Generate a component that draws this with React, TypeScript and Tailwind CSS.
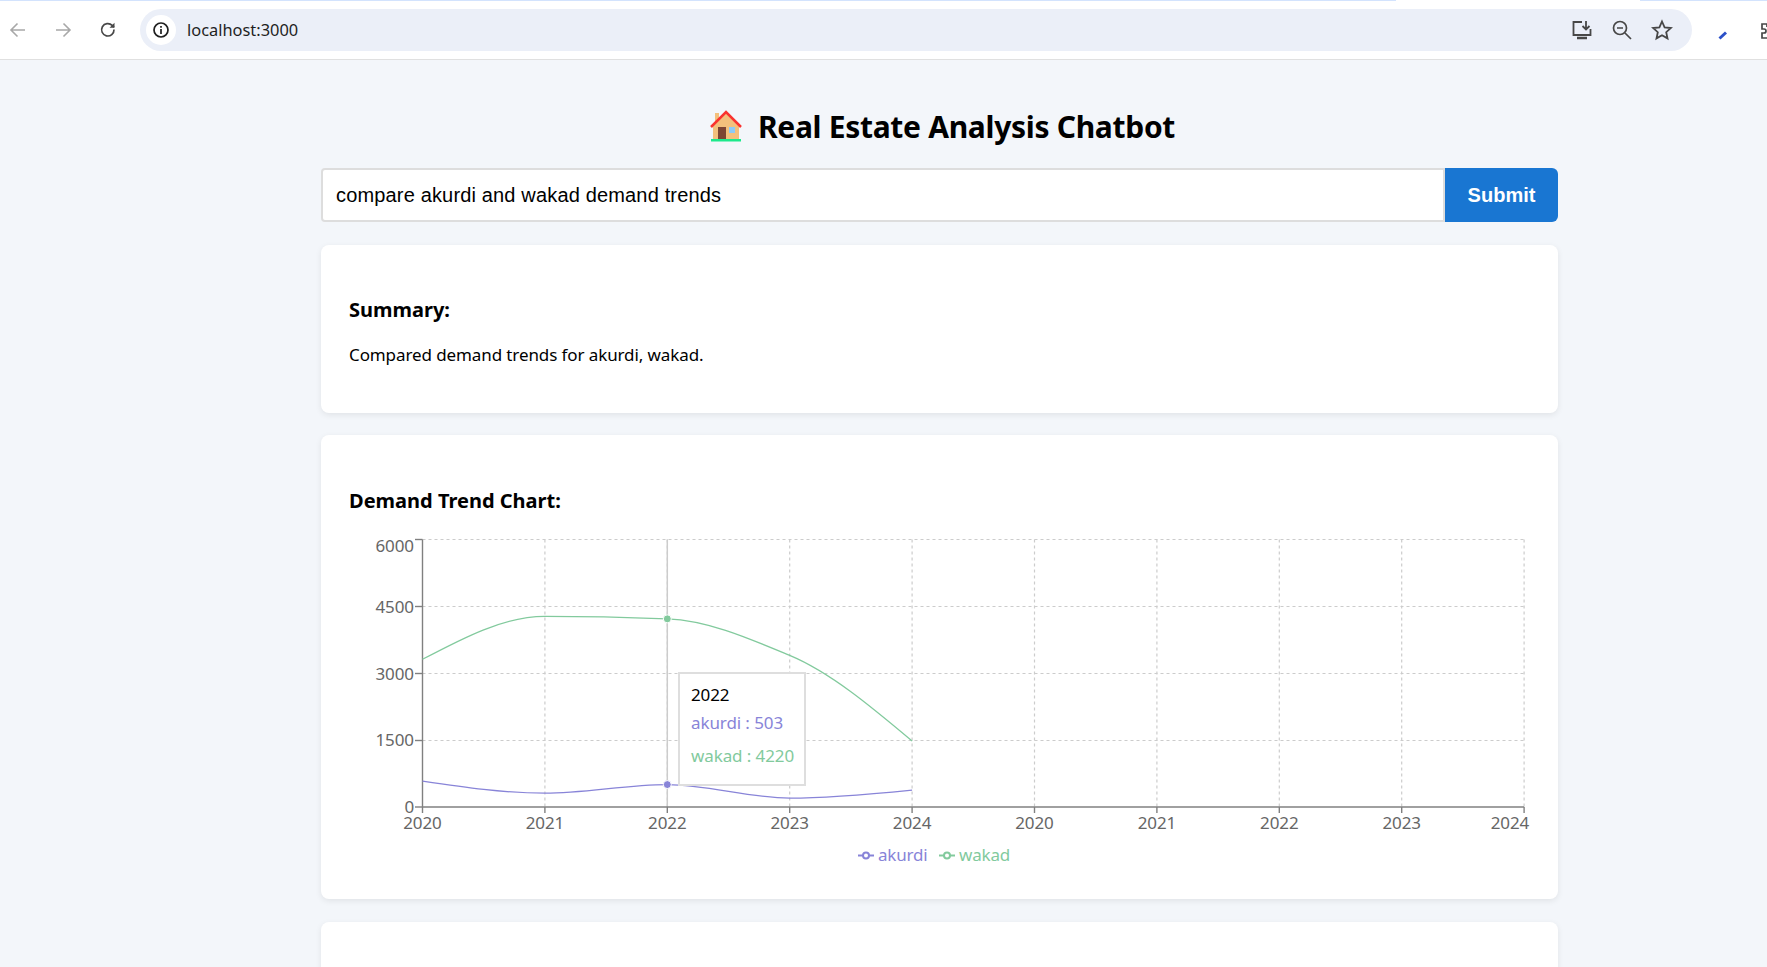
import React from 'react';

const bodyFont = "font-['Noto_Sans',sans-serif]";

const years = [2020, 2021, 2022, 2023, 2024];
const akurdi = [582, 310, 503, 200, 380];
const wakad = [3313, 4276, 4220, 3400, 1480];

const LEFT = 422.5;
const STEP = 122.4;
const RIGHT = LEFT + 9 * STEP;
const BOTTOM = 807;
const TOP = 539.5;
const xAt = (i: number) => LEFT + i * STEP;
const yAt = (v: number) => BOTTOM - (v / 6000) * (BOTTOM - TOP);

// same curve as recharts' "monotone" line
function monotonePath(values: number[]) {
  const pts = values.map((v, i) => [xAt(i), yAt(v)]);
  const n = pts.length;
  const slopes: number[] = [];
  for (let i = 0; i < n - 1; i++) {
    slopes.push((pts[i + 1][1] - pts[i][1]) / (pts[i + 1][0] - pts[i][0]));
  }
  const t: number[] = [];
  for (let i = 1; i < n - 1; i++) {
    const a = slopes[i - 1];
    const b = slopes[i];
    t[i] = a * b <= 0 ? 0 : (2 * a * b) / (a + b);
  }
  t[0] = (3 * slopes[0] - t[1]) / 2;
  t[n - 1] = (3 * slopes[n - 2] - t[n - 2]) / 2;
  let d = `M${pts[0][0]},${pts[0][1]}`;
  for (let i = 0; i < n - 1; i++) {
    const h = (pts[i + 1][0] - pts[i][0]) / 3;
    d += `C${pts[i][0] + h},${pts[i][1] + h * t[i]} ${pts[i + 1][0] - h},${pts[i + 1][1] - h * t[i + 1]} ${pts[i + 1][0]},${pts[i + 1][1]}`;
  }
  return d;
}

const BrowserBar: React.FC = () => (
  <div className="h-[60px] bg-white border-b border-[#e0e0e0] relative flex items-center shrink-0">
    <div className="absolute top-0 left-0 w-[1396px] h-px bg-[#d3e3fd]" />
    <div className="absolute top-0 left-[1640px] w-[127px] h-px bg-[#d3e3fd]" />
    <svg className="ml-[8px]" width="20" height="20" viewBox="0 0 20 20" fill="none" stroke="#a8a8a8" strokeWidth="1.6">
      <path d="M17 10H3.5M9.5 3.5L3 10l6.5 6.5" />
    </svg>
    <svg className="ml-[25px]" width="20" height="20" viewBox="0 0 20 20" fill="none" stroke="#a8a8a8" strokeWidth="1.6">
      <path d="M3 10h13.5M10.5 3.5L17 10l-6.500 6.500" />
    </svg>
    <svg className="ml-[25px]" width="20" height="20" viewBox="0 0 20 20" fill="none" stroke="#474747" strokeWidth="1.7">
      <path d="M16 9.500a6.200 6.200 0 1 1-1.800-4.100L16 7.200" />
      <path d="M16.500 2.800v5h-5" fill="#474747" stroke="none" />
    </svg>
    <div className="ml-[22px] w-[1552px] h-[42px] rounded-full bg-[#ebeff8] flex items-center pl-[6px] relative">
      <div className="w-[30px] h-[30px] rounded-full bg-white flex items-center justify-center">
        <svg width="18" height="18" viewBox="0 0 18 18" fill="none" stroke="#1f1f1f" strokeWidth="1.700">
          <circle cx="9" cy="9" r="7" />
          <path d="M9 8v5M9 5v1.800" />
        </svg>
      </div>
      <span className="ml-[11px] pt-[1px] text-[16.400px] leading-none text-[#1f1f1f] font-['Noto_Sans',sans-serif]">localhost:3000</span>
      <svg className="absolute left-[1431px] top-[10px]" width="22" height="22" viewBox="0 0 22 22" fill="none" stroke="#474747" strokeWidth="1.800">
        <path d="M11 3H2.500v13h17v-6" />
        <path d="M6 19h10" strokeWidth="2.500" />
        <path d="M15 2v8M11.500 7l3.500 3.500L18.500 7" />
      </svg>
      <svg className="absolute left-[1471px] top-[10px]" width="22" height="22" viewBox="0 0 22 22" fill="none" stroke="#474747" strokeWidth="1.700">
        <circle cx="9" cy="9" r="6.500" />
        <path d="M6 9h6M14 14l6 6" />
      </svg>
      <svg className="absolute left-[1511px] top-[10px]" width="22" height="22" viewBox="0 0 22 22" fill="none" stroke="#474747" strokeWidth="1.800">
        <path d="M11 2.500l2.600 5.800 6.300.700-4.700 4.200 1.300 6.200L11 16.300l-5.500 3.100 1.300-6.200L2.100 9l6.300-.700z" />
      </svg>
    </div>
    <svg className="absolute left-[1716px] top-[27px]" width="14" height="14" viewBox="0 0 14 14" fill="none">
      <path d="M3.500 11.500L10 5.500" stroke="#2b50c8" strokeWidth="3" />
    </svg>
    <svg className="absolute left-[1760px] top-[21px]" width="20" height="20" viewBox="0 0 20 20" fill="none" stroke="#474747" strokeWidth="1.700">
      <path d="M2 3h5v3a2 2 0 0 1 4 0V3h5v5h-3a2 2 0 0 0 0 4h3v5H2v-5h2a2 2 0 0 0 0-4H2z" />
    </svg>
  </div>
);

const HouseIcon: React.FC = () => (
  <svg width="34" height="34" viewBox="0 0 34 34">
    <rect x="6" y="4" width="4" height="10" fill="#f3c07c" />
    <path d="M4 16L17 4l13 12v14H4z" fill="#f3c07c" />
    <path d="M2 18L17 3l15 15" fill="none" stroke="#f9332f" strokeWidth="2.500" />
    <rect x="9" y="18" width="8" height="12" fill="#7d4533" />
    <rect x="20" y="18" width="6" height="6" fill="#8ccaf7" />
    <rect x="2" y="30" width="30" height="2.500" fill="#1de98b" />
  </svg>
);

const DemandChart: React.FC = () => {
  const hLines = [539.5, 606.5, 673.5, 740.5];
  const vLines = Array.from({ length: 9 }, (_, i) => xAt(i + 1));
  const xLabels = [...years, ...years];
  const yLabels: [string, number][] = [['6000', 546], ['4500', 607], ['3000', 674], ['1500', 740], ['0', 807]];

  return (
    <div className="relative h-[358px]">
      <svg width="1237" height="358" viewBox="321 513 1237 358" className="block" style={{ fontFamily: "'Noto Sans', sans-serif" }}>
        <g stroke="#ccc" strokeDasharray="3 3" strokeWidth="1.2" fill="none">
          {hLines.map(y => <line key={y} x1={LEFT} x2={RIGHT} y1={y} y2={y} />)}
          {vLines.map(x => <line key={x} x1={x} x2={x} y1={TOP} y2={BOTTOM} />)}
        </g>
        <line x1={xAt(2)} x2={xAt(2)} y1={TOP} y2={BOTTOM} stroke="#ccc" strokeWidth="1.5" />
        <g stroke="#808080" strokeWidth="1.400">
          <line x1={LEFT} x2={LEFT} y1={TOP} y2={BOTTOM} />
          <line x1={LEFT} x2={RIGHT} y1={BOTTOM} y2={BOTTOM} />
          {[539.5, 606.5, 673.5, 740.5, 807].map(y => <line key={y} x1={415} x2={LEFT} y1={y} y2={y} />)}
          {Array.from({ length: 10 }, (_, i) => <line key={i} x1={xAt(i)} x2={xAt(i)} y1={BOTTOM} y2={813} />)}
        </g>
        <g fill="#666" fontSize="17" letterSpacing="-0.1">
          {yLabels.map(([label, y]) => <text key={label} x={414} y={y + 6} textAnchor="end">{label}</text>)}
          {xLabels.map((label, i) => <text key={i} x={i === 9 ? 1510 : xAt(i)} y={829} textAnchor="middle">{label}</text>)}
        </g>
        <path d={monotonePath(akurdi)} fill="none" stroke="#8884d8" strokeWidth="1.300" />
        <path d={monotonePath(wakad)} fill="none" stroke="#82ca9d" strokeWidth="1.300" />
        <circle cx={xAt(2)} cy={yAt(503)} r="4" fill="#8884d8" stroke="#fff" />
        <circle cx={xAt(2)} cy={yAt(4220)} r="4" fill="#82ca9d" stroke="#fff" />
        <g fontSize="17" letterSpacing="-0.2">
          <line x1={858} x2={874} y1={855.500} y2={855.500} stroke="#8884d8" strokeWidth="2" />
          <circle cx={866} cy={855.500} r="3" fill="#fff" stroke="#8884d8" strokeWidth="2" />
          <text x={878} y={861} fill="#8884d8">akurdi</text>
          <line x1={939} x2={955} y1={855.500} y2={855.500} stroke="#82ca9d" strokeWidth="2" />
          <circle cx={947} cy={855.500} r="3" fill="#fff" stroke="#82ca9d" strokeWidth="2" />
          <text x={959} y={861} fill="#82ca9d">wakad</text>
        </g>
      </svg>
      {/* tooltip sits over the chart */}
      <div className="absolute left-[357px] top-[159px] w-[128px] h-[114px] bg-white border-2 border-[#dedede] pl-[11px] pt-[9px] text-[17px] tracking-[-0.1px] leading-[24px] font-['Noto_Sans',sans-serif]">
        <p className="text-black">2022</p>
        <p className="text-[#8884d8] mt-[4px]">akurdi : 503</p>
        <p className="text-[#82ca9d] mt-[9px]">wakad : 4220</p>
      </div>
    </div>
  );
};

const Card: React.FC<{ className?: string; children?: React.ReactNode }> = ({ className, children }) => (
  <div className={`bg-white rounded-lg shadow-[0_2px_6px_rgba(0,0,0,0.08)] px-[28px] ${className ?? ''}`}>{children}</div>
);

const App: React.FC = () => {
  return (
    <div className={`h-screen overflow-hidden bg-[#f3f6fa] flex flex-col ${bodyFont}`}>
      <BrowserBar />
      <main className="w-[1237px] ml-[321px] shrink-0">
        <h1 className="mt-[45px] h-[42px] pl-[5px] flex items-center justify-center gap-[15px] text-[30px] tracking-[-0.3px] font-bold text-black">
          <HouseIcon />
          <span>Real Estate Analysis Chatbot</span>
        </h1>
        <div className="mt-[21px] flex h-[54px]">
          <div className="flex-1 bg-white border-2 border-[#ddd] rounded-l-[4px] flex items-center pl-[13px] text-[20px] tracking-[0.16px] text-black font-['Liberation_Sans',sans-serif]">
            compare akurdi and wakad demand trends
          </div>
          <button className="w-[113px] bg-[#1976d2] text-white text-[20px] font-bold rounded-r-[6px] font-['Liberation_Sans',sans-serif]">
            Submit
          </button>
        </div>
        <Card className="mt-[23px] h-[168px] pt-[51px]">
          <h3 className="text-[20px] leading-[28px] font-bold text-black">Summary:</h3>
          <p className="mt-[19px] text-[17px] tracking-[-0.1px] leading-[24px] text-black">Compared demand trends for akurdi, wakad.</p>
        </Card>
        <Card className="mt-[22px] h-[464px] pt-[50px]">
          <h3 className="mt-[2px] h-[26px] text-[20px] leading-[28px] font-bold text-black">Demand Trend Chart:</h3>
          <div className="-mx-[28px]">
            <DemandChart />
          </div>
        </Card>
        <Card className="mt-[23px] h-[200px]" />
      </main>
    </div>
  );
};

export default App;
